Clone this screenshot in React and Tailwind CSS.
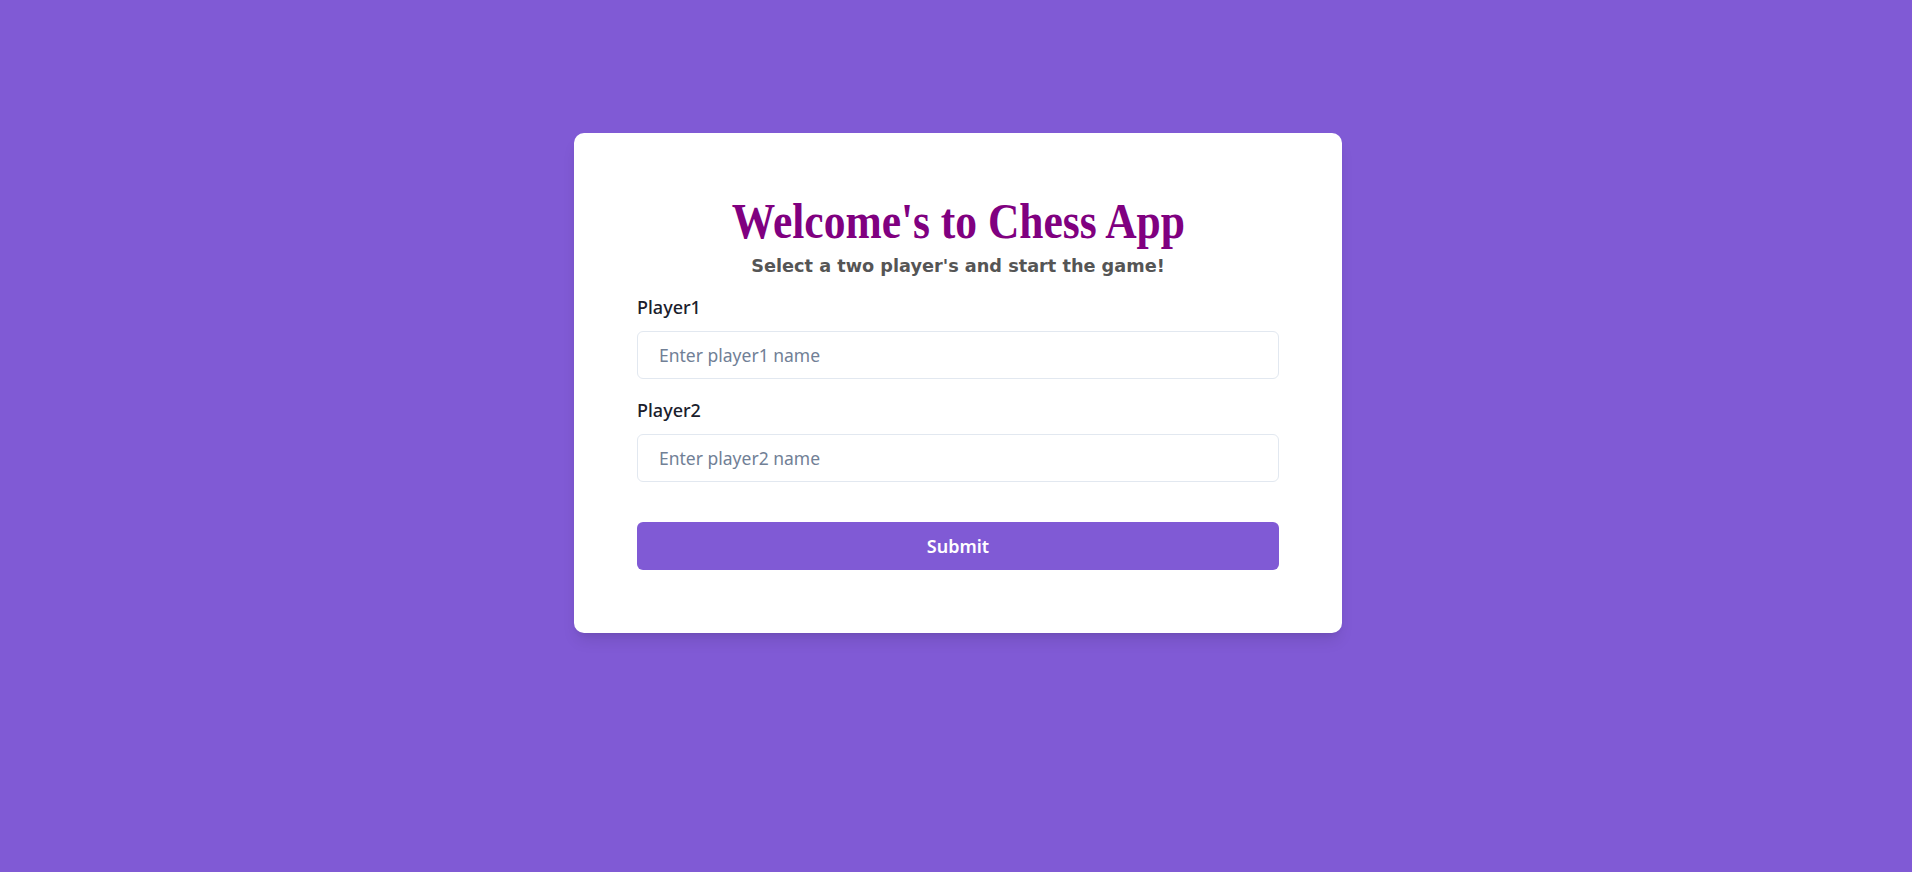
import { useState } from "react";

const App = () => {
  const [player1, setPlayer1] = useState("");
  const [player2, setPlayer2] = useState("");

  const handleSubmit = (e) => {
    e.preventDefault();
  };

  return (
    <div className="min-h-screen w-full bg-[#805ad5] pt-[133px] pl-1 font-['Noto_Sans',sans-serif]">
      <form
        onSubmit={handleSubmit}
        className="mx-auto w-[768px] rounded-[10px] bg-white p-[63px] shadow-lg"
      >
        <div className="text-center h-[50px]">
          <h1 className="inline-block scale-x-[0.87] whitespace-nowrap font-['Liberation_Serif',serif] text-[50px] font-bold leading-[50px] text-[#800080]">
            Welcome's to Chess App
          </h1>
        </div>
        <p className="mt-2 text-center font-['Comic_Sans_MS','DejaVu_Sans',sans-serif] text-[17.7px] font-bold leading-6 text-[#555555]">
          Select a two player's and start the game!
        </p>

        <label className="mt-[17px] mb-3 block text-[18px] font-medium leading-6 text-[#1a202c]">
          Player1
        </label>
        <input
          value={player1}
          onChange={(e) => setPlayer1(e.target.value)}
          placeholder="Enter player1 name"
          className="block h-12 w-full rounded-md border border-[#e2e8f0] px-[21px] text-[17.5px] text-[#1a202c] outline-none placeholder:text-[#718096]"
        />

        <label className="mt-[19px] mb-3 block text-[18px] font-medium leading-6 text-[#1a202c]">
          Player2
        </label>
        <input
          value={player2}
          onChange={(e) => setPlayer2(e.target.value)}
          placeholder="Enter player2 name"
          className="block h-12 w-full rounded-md border border-[#e2e8f0] px-[21px] text-[17.5px] text-[#1a202c] outline-none placeholder:text-[#718096]"
        />

        <button
          type="submit"
          className="mt-10 flex h-12 w-full items-center justify-center rounded-md bg-[#805ad5] text-[18px] font-semibold text-white"
        >
          Submit
        </button>
      </form>
    </div>
  );
};

export default App;
